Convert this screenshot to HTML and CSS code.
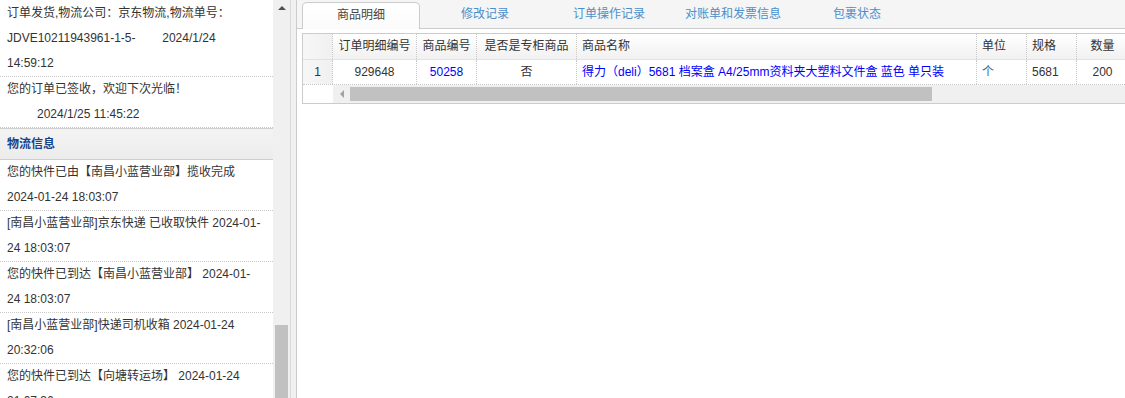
FILE: index.html
```html
<!DOCTYPE html>
<html lang="zh-CN">
<head>
    <meta charset="UTF-8">
    <meta name="viewport" content="width=device-width, initial-scale=1.0">
    <title>订单详情</title>
    <link rel="stylesheet" href="styles.css">
</head>
<body>
    <div class="page">
        <div class="side">
            <div class="side-list">
                <div class="note">订单发货,物流公司：京东物流,物流单号：JDVE10211943961-1-5-&nbsp;&nbsp;&nbsp;&nbsp;&nbsp;&nbsp;&nbsp;&nbsp;2024/1/24 14:59:12</div>
                <div class="note">
                    <div>您的订单已签收，欢迎下次光临！</div>
                    <div class="note-indent">2024/1/25 11:45:22</div>
                </div>
                <div class="note-head">物流信息</div>
                <div class="note">您的快件已由【南昌小蓝营业部】揽收完成 2024-01-24 18:03:07</div>
                <div class="note">[南昌小蓝营业部]京东快递 已收取快件 2024-01-24 18:03:07</div>
                <div class="note">您的快件已到达【南昌小蓝营业部】 2024-01-24 18:03:07</div>
                <div class="note">[南昌小蓝营业部]快递司机收箱 2024-01-24 20:32:06</div>
                <div class="note">您的快件已到达【向塘转运场】 2024-01-24 21:07:36</div>
            </div>
            <div class="vscroll">
                <div class="vscroll-up"></div>
                <div class="vscroll-thumb"></div>
            </div>
        </div>

        <div class="splitter"></div>

        <div class="main">
            <div class="tabs">
                <div class="tab tab-active">商品明细</div>
                <div class="tab">修改记录</div>
                <div class="tab">订单操作记录</div>
                <div class="tab">对账单和发票信息</div>
                <div class="tab">包裹状态</div>
            </div>

            <div class="grid">
                <div class="grid-row grid-head">
                    <div class="cell c-rn"></div>
                    <div class="cell c-id center">订单明细编号</div>
                    <div class="cell c-code center">商品编号</div>
                    <div class="cell c-flag center">是否是专柜商品</div>
                    <div class="cell c-name">商品名称</div>
                    <div class="cell c-unit">单位</div>
                    <div class="cell c-spec">规格</div>
                    <div class="cell c-qty center">数量</div>
                </div>
                <div class="grid-row grid-data">
                    <div class="cell c-rn center">1</div>
                    <div class="cell c-id center">929648</div>
                    <div class="cell c-code center link">50258</div>
                    <div class="cell c-flag center">否</div>
                    <div class="cell c-name link">得力（deli）5681 档案盒 A4/25mm资料夹大塑料文件盒 蓝色 单只装</div>
                    <div class="cell c-unit unit">个</div>
                    <div class="cell c-spec">5681</div>
                    <div class="cell c-qty center">200</div>
                </div>
                <div class="grid-row grid-scroll">
                    <div class="hscroll-pad"></div>
                    <div class="hscroll">
                        <div class="hscroll-left"></div>
                        <div class="hscroll-thumb"></div>
                    </div>
                </div>
            </div>
        </div>
    </div>
</body>
</html>
```

FILE: styles.css
```css
* {
    box-sizing: border-box;
}

html, body {
    margin: 0;
    height: 100%;
    overflow: hidden;
}

body {
    font-family: "Liberation Sans", "Noto Sans CJK SC", sans-serif;
    font-size: 12px;
    color: #333;
    background: #fff;
}

.page {
    display: flex;
    height: 398px;
}

/* left: order notes + logistics */
.side {
    display: flex;
    width: 290px;
    flex: none;
}

.side-list {
    width: 273px;
    padding-top: 1px;
    overflow: hidden;
}

.note {
    padding: 0 11px 0 7px;
    line-height: 25px;
    border-bottom: 1px dotted #c8c8c8;
}

.note-indent {
    padding-left: 30px;
}

.note-head {
    height: 32px;
    line-height: 30px;
    padding-left: 7px;
    font-weight: bold;
    color: #15428b;
    background: linear-gradient(#f4f4f4, #ececec);
    border-top: 1px solid #cfcfcf;
    border-bottom: 1px solid #cfcfcf;
}

.vscroll {
    width: 17px;
    display: flex;
    flex-direction: column;
    background: #f0f0f0;
}

.vscroll-up {
    height: 17px;
    display: flex;
    align-items: center;
    justify-content: center;
}

.vscroll-up::before {
    content: "";
    border-left: 4px solid transparent;
    border-right: 4px solid transparent;
    border-bottom: 4px solid #505050;
    margin-top: -1px;
}

.vscroll-thumb {
    flex: 1;
    margin: 308px 2px 0;
    background: #c1c1c1;
}

.splitter {
    width: 6px;
    flex: none;
    background: #f0f0f0;
    border-left: 1px solid #d9d9d9;
}

/* right: tabs + detail grid */
.main {
    flex: 1;
    min-width: 0;
    overflow: hidden;
    border-left: 1px solid #cccccc;
}

.tabs {
    display: flex;
    gap: 6px;
    height: 29px;
    padding: 2px 0 0 5px;
    background: #f5f5f5;
    border-bottom: 1px solid #cccccc;
}

.tab {
    width: 118px;
    flex: none;
    text-align: center;
    line-height: 25px;
    color: #4a8fcb;
}

.tab-active {
    margin-bottom: -1px;
    color: #444;
    background: linear-gradient(#ffffff, #fbfbfb);
    border: 1px solid #cccccc;
    border-bottom: 0;
    border-radius: 5px 5px 0 0;
}

.grid {
    width: 828px;
    margin: 4px 0 0 5px;
    border: 1px solid #cccccc;
}

.grid-row {
    display: flex;
}

.cell {
    flex: none;
    padding: 0 5px;
    white-space: nowrap;
    overflow: hidden;
    border-right: 1px dotted #c8c8c8;
}

.grid-head {
    background: linear-gradient(#ffffff, #f1f1f1);
    border-bottom: 1px solid #e2e2e2;
}

.grid-head .cell {
    height: 25px;
    line-height: 25px;
}

.grid-data {
    border-bottom: 1px dotted #c8c8c8;
}

.grid-data .cell {
    height: 24px;
    line-height: 24px;
}

.c-rn { width: 30px; background: linear-gradient(90deg, #f7f7f7, #f0f0f0); }
.c-id { width: 84px; }
.c-code { width: 60px; }
.c-flag { width: 100px; }
.c-name { width: 400px; }
.c-unit { width: 50px; }
.c-spec { width: 50px; }
.c-qty { width: 52px; }

.center {
    text-align: center;
}

.link {
    color: #0000ff;
}

.unit {
    color: #336699;
}

.grid-scroll {
    height: 18px;
}

.hscroll-pad {
    width: 30px;
    flex: none;
}

.hscroll {
    flex: 1;
    display: flex;
    align-items: center;
    background: #f0f0f0;
}

.hscroll-left {
    width: 17px;
    display: flex;
    align-items: center;
    justify-content: center;
}

.hscroll-left::before {
    content: "";
    border-top: 4px solid transparent;
    border-bottom: 4px solid transparent;
    border-right: 4px solid #a3a3a3;
}

.hscroll-thumb {
    width: 582px;
    height: 14px;
    background: #c1c1c1;
}
```
